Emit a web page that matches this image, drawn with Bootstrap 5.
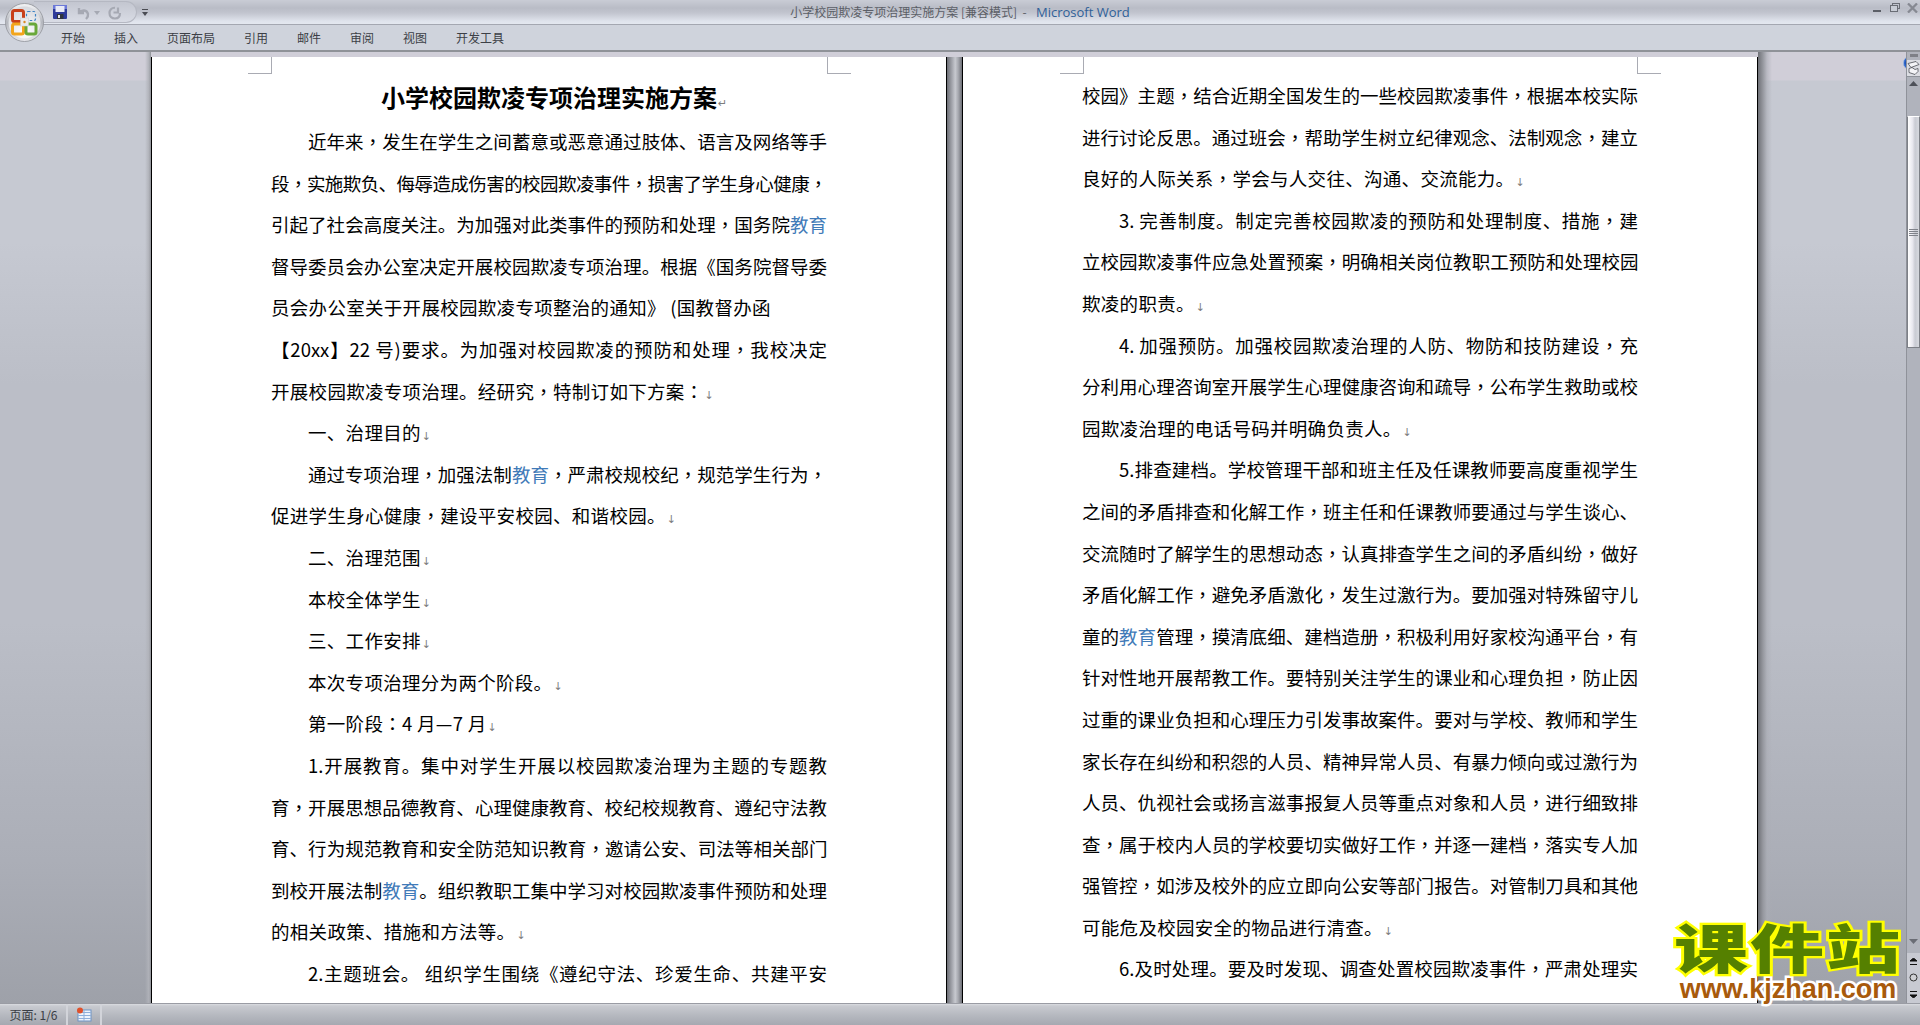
<!DOCTYPE html>
<html>
<head>
<meta charset="utf-8">
<title>小学校园欺凌专项治理实施方案</title>
<link rel="stylesheet" href="https://cdn.jsdelivr.net/npm/bootstrap@5.3.0/dist/css/bootstrap.min.css">
<style>
html,body{height:100%;overflow:hidden;background:#c6c9d2}
body{font-family:"Noto Sans CJK SC","Liberation Sans",sans-serif;color:#000}
.appwin{height:1025px}
.titlebar{height:25px;flex:none;border-bottom:1px solid #a4a7b1;background:linear-gradient(#c9ccd5 0,#b9bcc6 8px,#c2c5cf 13px,#dfe3ec 21px,#e4e8f0 24px);font-size:12px;line-height:24px;color:#5b5e66}
.titlebar .wname{color:#2f6098;font-family:"Open Sans",sans-serif;font-size:13px;margin-left:4px}
.qat{position:absolute;left:34px;top:1px;width:103px;height:22px;border:1px solid #b5b8c2;border-left:0;border-radius:0 12px 12px 0;background:linear-gradient(#c3c6d0,#d9dce5);}
.qat svg{position:absolute}
.tabs{height:27px;flex:none;background:#cfd3dc;border-bottom:2px solid #8f9298;padding-left:61px;gap:29px;font-size:12px;line-height:25px;color:#3c3f46}
.officebtn{position:absolute;left:5px;top:3px;width:39px;height:39px;z-index:5}
.helpic{position:absolute;left:1903px;top:31px}
.workarea{flex:1 1 auto;min-height:0;overflow:hidden;background:linear-gradient(#d0ced8 0,#d0ced8 28px,#c6c9d2 29px,#c6c9d2 20%,#bbbec7 35%,#bbbec7 60%,#abaeb7 85%,#9ea1a9 100%)}
.sideleft{width:151px;flex:none;background:linear-gradient(90deg,transparent 145px,#b0b2b9 149px,#8e9096 151px)}
.sideright{flex:1 1 auto;background:linear-gradient(90deg,#6f7177 0,#96989f 5px,rgba(170,172,180,.6) 9px,transparent 14px)}
.gutter{width:15px;flex:none;margin-top:5px;background:linear-gradient(90deg,#6d6f76,#a6a8af 35%,#c7c9cf 55%,#a6a8af 75%,#6d6f76)}
.sheet{width:796px;flex:none;margin-top:5px;background:#fff;border-left:1px solid #000;border-right:1px solid #000;position:relative;overflow:hidden;padding-left:119px}
.sheet.pa{padding-top:16px}
.sheet.pb{padding-top:18px}
.crop{position:absolute;top:0;width:24px;height:17px;border-bottom:1px solid #a9abb3}
.crop.cl{border-right:1px solid #a9abb3}
.crop.cr{border-left:1px solid #a9abb3}
.sheet.pa .crop.cl{left:96px}.sheet.pa .crop.cr{left:675px}
.sheet.pb .crop.cl{left:97px}.sheet.pb .crop.cr{left:674px}
.dochead{width:556px;height:48px;line-height:48px;text-align:center;font-size:24px;font-weight:700;white-space:nowrap;padding-left:10px}
.tl{width:556px;height:41.6px;line-height:41.6px;font-size:18.5px;text-align:justify;text-align-last:justify;white-space:nowrap}
.tl.e{text-align-last:left;letter-spacing:.3px}
.tl.in{text-indent:37px}
.tl.sq{letter-spacing:-.6px}
.tl i{font-style:normal;font-family:"Noto Sans CJK TC",sans-serif}
.tl em{font-style:normal;color:#3f7ab8}
.pmk{font:11px "DejaVu Sans",sans-serif;color:#7d7d7d;margin-left:1px;font-weight:400;letter-spacing:0}
.vscroll{width:14px;flex:none;background:#b0b3bc;border-left:1px solid #8f929a;position:relative}
.vscroll>*{display:block;flex:none}
.grip{height:3px;width:8px;background:#7e8087;margin:2px auto 3px}
.rulerb{height:17px;background:#dcdde3;border-bottom:1px solid #8f929a}
.arrowb{height:22px;display:flex!important;align-items:flex-start;justify-content:center;padding-top:4px}
.thumb{height:232px;margin-top:17px;border:1px solid #7d8087;border-top-color:#fff;border-bottom-color:#7d8087;background:linear-gradient(90deg,#fff,#e9e8ef 40%,#c9cbd3 65%,#d7d9df);display:flex!important;align-items:center;justify-content:center}
.trk{flex:1 1 auto!important}
.smb{height:16px;display:flex!important;align-items:center;justify-content:center;background:#c8cad2}
.statusbar{height:22px;flex:none;background:linear-gradient(#dadce1 0,#c8cad0 2px,#b3b6bd 60%,#a6a9b1 100%);border-top:1px solid #9a9ca4;font-size:12px;line-height:21px;color:#3a3d44}
.stcell{border-right:2px solid #d2d4da;height:100%;display:flex;align-items:center;justify-content:center}
.stp{width:68px;padding-left:1px}
.sti{width:34px}
.wmark{position:absolute;left:1668px;top:918px;width:240px;z-index:6;text-align:center;pointer-events:none}
.wmark .w1{font-size:74px;line-height:64px;height:62px;font-weight:900;letter-spacing:2px;color:#558000;-webkit-text-stroke:6px #ffff00;paint-order:stroke fill;white-space:nowrap;font-family:"Noto Sans CJK SC",sans-serif;transform:scaleY(.72);transform-origin:50% 30%}
.wmark .w2{font:700 27px/26px "Liberation Sans",sans-serif;color:#a85a0c;-webkit-text-stroke:5px #fff;paint-order:stroke fill;white-space:nowrap;margin-top:-4px}
</style>
</head>
<body>
<div class="appwin d-flex flex-column position-relative overflow-hidden">

  <svg class="officebtn" viewBox="0 0 39 39">
    <defs>
      <linearGradient id="rim" x1="0" y1="0" x2="0" y2="1"><stop offset="0" stop-color="#f4f5f7"/><stop offset=".5" stop-color="#b5b8bf"/><stop offset="1" stop-color="#e8e9ee"/></linearGradient>
      <radialGradient id="orb" cx=".5" cy=".8" r=".8"><stop offset="0" stop-color="#ffffff"/><stop offset="1" stop-color="#d7d9de"/></radialGradient>
    </defs>
    <circle cx="19.5" cy="19.5" r="19" fill="url(#rim)" stroke="#8f9298" stroke-width=".8"/>
    <circle cx="19.5" cy="19.5" r="16" fill="url(#orb)"/>
    <rect x="7.5" y="7.5" width="11" height="11" rx="2" fill="none" stroke="#c8401a" stroke-width="3"/>
    <rect x="21.5" y="8.5" width="9" height="9" rx="1.5" fill="none" stroke="#3d83c4" stroke-width="1.2" stroke-dasharray="2.5 2"/>
    <rect x="7.5" y="21" width="11" height="10" rx="2" fill="none" stroke="#f2a51c" stroke-width="3"/>
    <rect x="21" y="21" width="10" height="10" rx="2" fill="none" stroke="#69a83a" stroke-width="3"/>
    <rect x="15.5" y="15" width="8" height="8" fill="#e9eaec" stroke="#c7c9ce" stroke-width=".5"/>
    <circle cx="19.5" cy="19" r="1.2" fill="#d88a25"/>
  </svg>

  <header class="titlebar d-flex justify-content-center position-relative">
    <div class="qat">
      <svg style="left:19px;top:3px" width="15" height="15" viewBox="0 0 15 15"><rect width="14" height="14" rx="1" fill="#2d3a9a"/><rect x="0" y="0" width="14" height="4" fill="#6c79d8"/><rect x="2.5" y="1" width="9" height="6" fill="#e8eaf6"/><rect x="4" y="9" width="6.5" height="5" fill="#30343c"/><rect x="5" y="10" width="2" height="3" fill="#e0e2e8"/></svg>
      <svg style="left:42px;top:4px" width="15" height="14" viewBox="0 0 15 14"><path d="M3 2v5h5M3 7c3-4 8-3 9 1 .4 2-1 4-2 5" fill="none" stroke="#a6a9b3" stroke-width="2.4"/></svg>
      <svg style="left:60px;top:9px" width="6" height="4" viewBox="0 0 6 4"><path d="M0 0h6L3 4z" fill="#a6a9b3"/></svg>
      <svg style="left:74px;top:4px" width="14" height="14" viewBox="0 0 14 14"><path d="M10 1.500v5H5.500M7 1.800C3.500 1.500 1.500 4 1.500 7s2 5.500 5.500 5.500S12 10 12 7" fill="none" stroke="#a6a9b3" stroke-width="2.2"/></svg>
    </div>
    <svg class="position-absolute" style="left:142px;top:9px" width="6" height="7" viewBox="0 0 6 7"><rect width="6" height="1" fill="#4a4c53"/><path d="M0 3h6L3 7z" fill="#4a4c53"/></svg>
    <div>小学校园欺凌专项治理实施方案 [兼容模式]&nbsp; - &nbsp;<span class="wname">Microsoft Word</span></div>
    <svg class="position-absolute" style="left:1873px;top:10px" width="8" height="3" viewBox="0 0 8 3"><rect width="8" height="2" fill="#5c5f67"/></svg>
    <svg class="position-absolute" style="left:1890px;top:3px" width="10" height="9" viewBox="0 0 10 9"><rect x="2.5" y=".5" width="7" height="5" fill="none" stroke="#6a6d75"/><rect x=".5" y="2.5" width="7" height="6" fill="#c8ccd5" stroke="#6a6d75"/></svg>
    <svg class="position-absolute" style="left:1907px;top:3px" width="11" height="10" viewBox="0 0 11 10"><path d="M1 .5l9 9M10 .5l-9 9" stroke="#868992" stroke-width="2.3" fill="none"/></svg>
  </header>

  <nav class="tabs d-flex position-relative">
    <span>开始</span><span>插入</span><span>页面布局</span><span>引用</span><span>邮件</span><span>审阅</span><span>视图</span><span>开发工具</span>
    <svg class="helpic" width="14" height="14" viewBox="0 0 14 14"><circle cx="7" cy="7" r="6.6" fill="#2f66c9" stroke="#9db6de" stroke-width=".8"/><circle cx="7" cy="7" r="4.8" fill="#1c4fb4"/><text x="7" y="10.6" font-size="10" font-weight="700" font-family="Liberation Sans" fill="#fff" text-anchor="middle">?</text></svg>
  </nav>

  <main class="workarea d-flex">
    <div class="sideleft"></div>

    <section class="sheet pa">
      <div class="crop cl"></div><div class="crop cr"></div>
      <div class="dochead">小学校园欺凌专项治理实施方案<span class="pmk">↵</span></div>
      <div class="tl in">近年来<i>，</i>发生在学生之间蓄意或恶意通过肢体、语言及网络等手</div>
      <div class="tl sq">段<i>，</i>实施欺负、侮辱造成伤害的校园欺凌事件<i>，</i>损害了学生身心健康<i>，</i></div>
      <div class="tl">引起了社会高度关注。为加强对此类事件的预防和处理<i>，</i>国务院<em>教育</em></div>
      <div class="tl">督导委员会办公室决定开展校园欺凌专项治理。根据《国务院督导委</div>
      <div class="tl e">员会办公室关于开展校园欺凌专项整治的通知》 (国教督办函</div>
      <div class="tl">【20xx】22 号)要求。为加强对校园欺凌的预防和处理<i>，</i>我校决定</div>
      <div class="tl e">开展校园欺凌专项治理。经研究<i>，</i>特制订如下方案<i>：</i><span class="pmk">↓</span></div>
      <div class="tl e in">一、治理目的<span class="pmk">↓</span></div>
      <div class="tl in">通过专项治理<i>，</i>加强法制<em>教育</em><i>，</i>严肃校规校纪<i>，</i>规范学生行为<i>，</i></div>
      <div class="tl e">促进学生身心健康<i>，</i>建设平安校园、和谐校园。<span class="pmk">↓</span></div>
      <div class="tl e in">二、治理范围<span class="pmk">↓</span></div>
      <div class="tl e in">本校全体学生<span class="pmk">↓</span></div>
      <div class="tl e in">三、工作安排<span class="pmk">↓</span></div>
      <div class="tl e in">本次专项治理分为两个阶段。<span class="pmk">↓</span></div>
      <div class="tl e in">第一阶段<i>：</i>4 月—7 月<span class="pmk">↓</span></div>
      <div class="tl in">1.开展教育。集中对学生开展以校园欺凌治理为主题的专题教</div>
      <div class="tl">育<i>，</i>开展思想品德教育、心理健康教育、校纪校规教育、遵纪守法教</div>
      <div class="tl sq">育、行为规范教育和安全防范知识教育<i>，</i>邀请公安、司法等相关部门</div>
      <div class="tl">到校开展法制<em>教育</em>。组织教职工集中学习对校园欺凌事件预防和处理</div>
      <div class="tl e">的相关政策、措施和方法等。<span class="pmk">↓</span></div>
      <div class="tl in">2.主题班会。 组织学生围绕《遵纪守法、珍爱生命、共建平安</div>
    </section>

    <div class="gutter"></div>

    <section class="sheet pb">
      <div class="crop cl"></div><div class="crop cr"></div>
      <div class="tl">校园》主题<i>，</i>结合近期全国发生的一些校园欺凌事件<i>，</i>根据本校实际</div>
      <div class="tl">进行讨论反思。通过班会<i>，</i>帮助学生树立纪律观念、法制观念<i>，</i>建立</div>
      <div class="tl e">良好的人际关系<i>，</i>学会与人交往、沟通、交流能力。<span class="pmk">↓</span></div>
      <div class="tl in">3. 完善制度。制定完善校园欺凌的预防和处理制度、措施<i>，</i>建</div>
      <div class="tl sq">立校园欺凌事件应急处置预案<i>，</i>明确相关岗位教职工预防和处理校园</div>
      <div class="tl e">欺凌的职责。<span class="pmk">↓</span></div>
      <div class="tl in">4. 加强预防。加强校园欺凌治理的人防、物防和技防建设<i>，</i>充</div>
      <div class="tl">分利用心理咨询室开展学生心理健康咨询和疏导<i>，</i>公布学生救助或校</div>
      <div class="tl e">园欺凌治理的电话号码并明确负责人。<span class="pmk">↓</span></div>
      <div class="tl in">5.排查建档。学校管理干部和班主任及任课教师要高度重视学生</div>
      <div class="tl">之间的矛盾排查和化解工作<i>，</i>班主任和任课教师要通过与学生谈心、</div>
      <div class="tl">交流随时了解学生的思想动态<i>，</i>认真排查学生之间的矛盾纠纷<i>，</i>做好</div>
      <div class="tl">矛盾化解工作<i>，</i>避免矛盾激化<i>，</i>发生过激行为。要加强对特殊留守儿</div>
      <div class="tl">童的<em>教育</em>管理<i>，</i>摸清底细、建档造册<i>，</i>积极利用好家校沟通平台<i>，</i>有</div>
      <div class="tl">针对性地开展帮教工作。要特别关注学生的课业和心理负担<i>，</i>防止因</div>
      <div class="tl">过重的课业负担和心理压力引发事故案件。要对与学校、教师和学生</div>
      <div class="tl">家长存在纠纷和积怨的人员、精神异常人员、有暴力倾向或过激行为</div>
      <div class="tl">人员、仇视社会或扬言滋事报复人员等重点对象和人员<i>，</i>进行细致排</div>
      <div class="tl">查<i>，</i>属于校内人员的学校要切实做好工作<i>，</i>并逐一建档<i>，</i>落实专人加</div>
      <div class="tl">强管控<i>，</i>如涉及校外的应立即向公安等部门报告。对管制刀具和其他</div>
      <div class="tl e">可能危及校园安全的物品进行清查。<span class="pmk">↓</span></div>
      <div class="tl in">6.及时处理。要及时发现、调查处置校园欺凌事件<i>，</i>严肃处理实</div>
    </section>

    <div class="sideright"></div>

    <aside class="vscroll d-flex flex-column">
      <span class="grip"></span>
      <span class="rulerb"><svg width="13" height="16" viewBox="0 0 13 15" style="display:block"><path d="M1 3l8-2 3 3-8 3zM2 8l3-1 3 2 3-1v3l-3 3-6-2z" fill="#f4f4f7" stroke="#4b4e56" stroke-width=".8"/></svg></span>
      <span class="arrowb"><svg width="9" height="5" viewBox="0 0 9 5"><path d="M0 5L4.500 0 9 5z" fill="#4e5159"/></svg></span>
      <span class="thumb"><svg width="9" height="7" viewBox="0 0 9 7"><path d="M0 .5h9M0 2.500h9M0 4.500h9M0 6.500h9" stroke="#7f828a"/></svg></span>
      <span class="trk"></span>
      <span class="arrowb" style="height:18px"><svg width="9" height="5" viewBox="0 0 9 5"><path d="M0 0L4.500 5 9 0z" fill="#6a6d75"/></svg></span>
      <span class="smb"><svg width="7" height="7" viewBox="0 0 7 7"><path d="M0 3L3.500 0 7 3zM0 6.500h7" fill="#111" stroke="#111"/></svg></span>
      <span class="smb"><svg width="9" height="9" viewBox="0 0 9 9"><circle cx="4.500" cy="4.500" r="3.500" fill="#cfd0d4" stroke="#333"/></svg></span>
      <span class="smb" style="height:18px"><svg width="7" height="7" viewBox="0 0 7 7"><path d="M0 4L3.500 7 7 4zM0 .5h7" fill="#111" stroke="#111"/></svg></span>
    </aside>
  </main>

  <footer class="statusbar d-flex">
    <div class="stcell stp">页面: 1/6</div>
    <div class="stcell sti"><svg width="16" height="15" viewBox="0 0 16 15"><rect x="2" y="3" width="13" height="11" fill="#eef4fc" stroke="#6f93c4"/><path d="M2 5.500h13M2 8.500h13M2 11.500h13M8 3v11" stroke="#8fb0da"/><circle cx="4" cy="3.500" r="3" fill="#e0512b"/></svg></div>
  </footer>

  <div class="wmark">
    <div class="w1">课件站</div>
    <div class="w2">www.kjzhan.com</div>
  </div>
</div>
<script src="https://cdn.jsdelivr.net/npm/bootstrap@5.3.0/dist/js/bootstrap.bundle.min.js"></script>
</body>
</html>
